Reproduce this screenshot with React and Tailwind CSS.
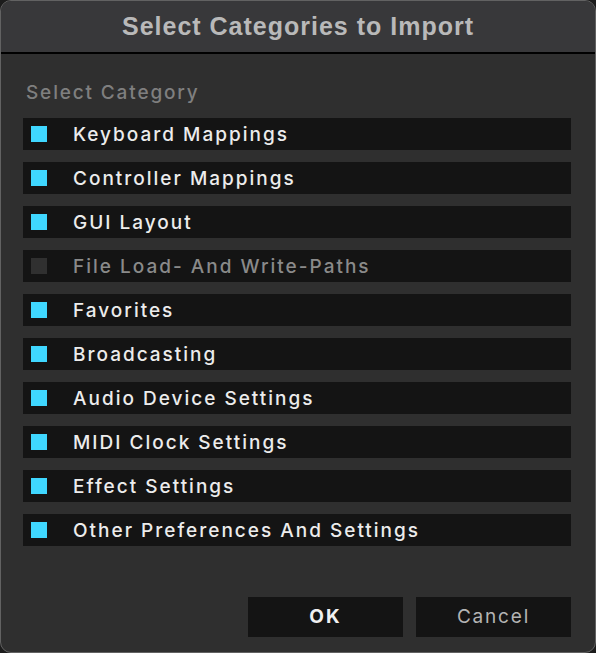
import React, { useState } from 'react'

const CATEGORIES = [
  { label: 'Keyboard Mappings', checked: true },
  { label: 'Controller Mappings', checked: true },
  { label: 'GUI Layout', checked: true },
  { label: 'File Load- And Write-Paths', checked: false, disabled: true },
  { label: 'Favorites', checked: true },
  { label: 'Broadcasting', checked: true },
  { label: 'Audio Device Settings', checked: true },
  { label: 'MIDI Clock Settings', checked: true },
  { label: 'Effect Settings', checked: true },
  { label: 'Other Preferences And Settings', checked: true },
]

export default function App() {
  const [items, setItems] = useState(CATEGORIES)

  function toggle(i) {
    setItems((prev) =>
      prev.map((it, idx) => (idx === i && !it.disabled ? { ...it, checked: !it.checked } : it))
    )
  }

  return (
    <div className="w-[596px] h-[653px] bg-[#1c1c1c] font-['Inter',sans-serif]">
      <div className="h-full flex flex-col rounded-[11px] border border-[#626262] overflow-hidden bg-[#2f2f2f]">
        {/* title bar */}
        <div className="h-[53px] shrink-0 bg-[#38383a] border-b-2 border-black flex items-center justify-center">
          <h1 className="font-['Liberation_Sans',Arial,sans-serif] text-[25px] font-bold tracking-[1px] text-[#b9b9b9]">
            Select Categories to Import
          </h1>
        </div>

        <div className="flex-1 flex flex-col pl-[22px] pr-[24px]">
          <p className="mt-[27px] ml-[3px] text-[19px] font-medium tracking-[1.85px] text-[#7f7f7f] leading-6">
            Select Category
          </p>

          <ul className="mt-[13px] flex flex-col gap-3">
            {items.map((it, i) => (
              <li
                key={it.label}
                onClick={() => toggle(i)}
                className="h-8 bg-[#141414] flex items-center cursor-default"
              >
                <span
                  className={
                    'ml-2 w-4 h-4 shrink-0 ' +
                    (it.checked ? 'bg-[#3fd7ff]' : 'bg-[#303030]')
                  }
                />
                <span
                  className={
                    'ml-[26px] pt-[2px] text-[19px] font-medium tracking-[2px] ' +
                    (it.disabled ? 'text-[#8a8a8a]' : 'text-[#ececec]')
                  }
                >
                  {it.label}
                </span>
              </li>
            ))}
          </ul>

          <div className="mt-auto mb-[15px] flex justify-end gap-[13px]">
            <button className="w-[155px] h-10 bg-[#141414] text-[19px] font-bold tracking-[2px] text-[#f0f0f0]">
              OK
            </button>
            <button className="w-[155px] h-10 bg-[#141414] text-[19px] tracking-[1.8px] text-[#b4b4b4]">
              Cancel
            </button>
          </div>
        </div>
      </div>
    </div>
  )
}
